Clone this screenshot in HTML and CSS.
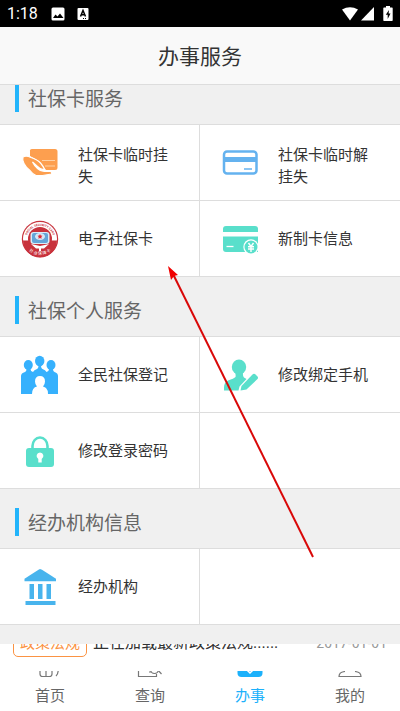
FILE: index.html
```html
<!DOCTYPE html>
<html lang="zh-CN">
<head>
    <meta charset="UTF-8">
    <meta name="viewport" content="width=device-width, initial-scale=1.0">
    <title>办事服务</title>
    <link rel="stylesheet" href="styles.css">
</head>
<body>
    <div class="status-bar">
        <span class="time">1:18</span>
        <svg width="14" height="14" viewBox="0 0 14 14">
            <rect x="0.5" y="0.5" width="13" height="13" rx="1.5" fill="#fff"/>
            <path d="M2 11l2.500-3.500 2 2 2.500-3 3.500 4.500z" fill="#000"/>
        </svg>
        <svg class="status-app" width="12" height="14" viewBox="0 0 12 14">
            <rect x="0.500" y="1" width="11" height="12" rx="1" fill="#fff"/>
            <path d="M3.500 9.500L6 3.500l2.500 6M4.300 7.700h3.400" fill="none" stroke="#000" stroke-width="1.500"/>
            <path d="M6 11.500h1M8 11.500h1" stroke="#000"/>
        </svg>
        <div class="status-right">
            <svg width="18" height="14" viewBox="0 0 18 14"><path d="M1 2.500Q9-2 17 2.500L9 13.500z" fill="#fff"/></svg>
            <svg width="13" height="14" viewBox="0 0 13 14"><path d="M13 0v13.500H0z" fill="#fff"/></svg>
            <svg class="battery" width="10" height="15" viewBox="0 0 10 15">
                <path d="M3 0h4v1.500h2q.700 0 .700.700v12q0 .800-.700.800H1q-.700 0-.700-.800v-12q0-.700.700-.700h2z" fill="#fff"/>
                <path d="M6 4L2.800 8.800h1.900V13L7.500 7.500H5.600z" fill="#000"/>
            </svg>
        </div>
    </div>

    <header>
        <h1>办事服务</h1>
    </header>

    <main>
        <h2>社保卡服务</h2>
        <div class="grid">
            <a href="#" class="item">
                <svg class="icon" viewBox="0 0 40 40">
                    <path d="M12 6h23q2.500 0 2.500 2.500v16q0 2.500-2.500 2.500H26L19 18l-9-5V8.500Q9.500 6 12 6z" fill="#fd9f4f"/>
                    <path d="M22 17.500h13M25 23h10" stroke="#ffd2a6" stroke-width="1"/>
                    <path d="M3 14q3-2 8 .500 7 2.500 9.500 5.500 3 3.500 4 6.500-4 .500-7-3l-5-4.500q2 4 5 6.500 3 3 7 3h6q2 1 1 2.500l-9 1.500H16q-3.500-1.500-6-5-4-3-6-7-2-3.500-1-6.500z" fill="#fd9f4f" stroke="#fff" stroke-width="1.200"/>
                </svg>
                <span class="label label-long">社保卡临时挂失</span>
            </a>
            <a href="#" class="item">
                <svg class="icon" viewBox="0 0 40 40">
                    <rect x="4" y="8.500" width="32.500" height="22" rx="3" fill="#fff" stroke="#64b2ef" stroke-width="2.500"/>
                    <path d="M4 16.500h32" stroke="#64b2ef" stroke-width="5"/>
                    <path d="M24 26h8" stroke="#64b2ef" stroke-width="1.500"/>
                </svg>
                <span class="label label-long">社保卡临时解挂失</span>
            </a>
            <a href="#" class="item">
                <svg class="icon" viewBox="0 0 40 40">
                    <defs>
                        <path id="arc-top" d="M7 24a13.500 13.500 0 1 1 26 0"/>
                        <path id="arc-bottom" d="M4.500 24a16 16 0 0 0 31 0"/>
                    </defs>
                    <circle cx="20" cy="20" r="18.200" fill="#c8323c"/>
                    <circle cx="20" cy="20" r="17" fill="#fff"/>
                    <path d="M3 21.500h34a17 17 0 0 1-34 0z" fill="#c8323c"/>
                    <circle cx="20" cy="20" r="12" fill="#c8323c"/>
                    <path d="M11 25l9 2 9-2-5 4.500h-3V32h-2v-2.500h-3z" fill="#fff"/>
                    <rect x="10.500" y="13" width="19" height="12" rx="3" fill="#d8edf8"/>
                    <rect x="12" y="14" width="16" height="10" rx="2" fill="#64a5d8"/>
                    <ellipse cx="20" cy="17.500" rx="5" ry="3.500" fill="#d6e9f6"/>
                    <path d="M20 15l.800 1.600 1.700.200-1.200 1.200.300 1.700-1.600-.800-1.600.800.300-1.700-1.200-1.200 1.700-.200z" fill="#df2936"/>
                    <text class="seal-en"><textPath href="#arc-top" startOffset="50%">SOCIAL SECURITY CARD</textPath></text>
                    <text class="seal-cn"><textPath href="#arc-bottom" startOffset="50%">社 会 保 障 卡</textPath></text>
                </svg>
                <span class="label">电子社保卡</span>
            </a>
            <a href="#" class="item">
                <svg class="icon" viewBox="0 0 40 40">
                    <path d="M3 13v-3q0-3 3-3h29q3 0 3 3v3z" fill="#59dfcb"/>
                    <path d="M3 17.500h35V33H6q-3 0-3-3z" fill="#59dfcb"/>
                    <path d="M6.500 27.500h7" stroke="#fff" stroke-width="1.300"/>
                    <circle cx="31" cy="28" r="7.700" fill="#fff"/>
                    <circle cx="31" cy="28" r="6.500" fill="#59dfcb"/>
                    <path d="M28.500 24l2.500 3.500 2.500-3.500M28 27.800h6M28 30h6M31 27.500V33" fill="none" stroke="#fff" stroke-width="1.400"/>
                </svg>
                <span class="label">新制卡信息</span>
            </a>
        </div>

        <h2>社保个人服务</h2>
        <div class="grid">
            <a href="#" class="item">
                <svg class="icon" viewBox="0 0 40 40" fill="#36b1fd">
                    <ellipse cx="8.300" cy="10" rx="4.500" ry="5"/>
                    <ellipse cx="31" cy="10" rx="4.500" ry="5"/>
                    <ellipse cx="19.700" cy="6" rx="4.700" ry="5.300"/>
                    <path d="M1 39V21q0-3 4-4 1.500-.500 1.500-3h4q0 2.500 2.500 3 1-2 4-3 1.500-.500 1.500-4h2.500q0 3.500 1.500 4 3 1 4 3 2.500-.500 2.500-3h4q0 2.500 1.500 3 3.500 1 3.500 4v18h-10q0-4-2-6-1-1-3-1.500 2-2 2-5 0-5.500-5-5.500t-5 5.500q0 3 2 5-5 1-5 7.500z"/>
                </svg>
                <span class="label">全民社保登记</span>
            </a>
            <a href="#" class="item">
                <svg class="icon" viewBox="0 0 40 40" fill="#59dfcb">
                    <ellipse cx="19" cy="12" rx="7.200" ry="7.600"/>
                    <path d="M15 16h8q-.500 5 1 6.500l2.500 1.500-7 7.500-1 4H4v-3q0-5 4-7 6-2 7.500-3.500Q16 21 15 16z"/>
                    <path d="M21.500 31L32.500 19.500q1.500-1.500 3 0l2 2q1 1 0 2.500L26.500 34.500l-6 1z"/>
                </svg>
                <span class="label">修改绑定手机</span>
            </a>
            <a href="#" class="item">
                <svg class="icon" viewBox="0 0 40 40">
                    <path d="M12.500 19v-4a7.500 8.500 0 0 1 15 0v4" fill="none" stroke="#59dfcb" stroke-width="2.600"/>
                    <rect x="6" y="17" width="28" height="19" rx="3" fill="#59dfcb"/>
                    <path d="M20 21.500a3.500 3.500 0 0 1 1.700 6.500v3.500h-3.400V28a3.500 3.500 0 0 1 1.700-6.500z" fill="#fff"/>
                </svg>
                <span class="label">修改登录密码</span>
            </a>
            <div class="item"></div>
        </div>

        <h2>经办机构信息</h2>
        <div class="grid">
            <a href="#" class="item">
                <svg class="icon" viewBox="0 0 40 40" fill="#48b4ed">
                    <path d="M20 2l2 .800 14 9v2.500H4.500v-2.500l14-9z"/>
                    <path d="M9.500 17H14v15H9.500zM18 17h4.500v15H18zM26.500 17H31v15h-4.500zM5.500 34h30v4h-30z"/>
                </svg>
                <span class="label">经办机构</span>
            </a>
            <div class="item"></div>
        </div>
    </main>

    <div class="ticker">
        <span class="tag">政策法规</span>
        <span class="news">正在加载最新政策法规......</span>
        <span class="date">2017-01-01</span>
    </div>

    <nav>
        <a href="#">
            <svg width="26" height="24" viewBox="0 0 26 24"><path d="M3 10v10q0 2.500 2.500 2.500h7Q15 22.500 15 20V10M9 14v8M19 22q3-3 2-9" fill="none" stroke="#777" stroke-width="1.200"/></svg>
            <span>首页</span>
        </a>
        <a href="#">
            <svg width="26" height="24" viewBox="0 0 26 24"><path d="M1.500 10v12.500h18V20" fill="none" stroke="#777" stroke-width="1.200"/><path d="M12 18h2M24.500 20L20 15" stroke="#777" stroke-width="1.200"/><circle cx="17.500" cy="15.500" r="4" fill="none" stroke="#777" stroke-width="1.200"/></svg>
            <span>查询</span>
        </a>
        <a href="#" class="active">
            <svg width="26" height="24" viewBox="0 0 26 24"><rect x="0.500" y="2" width="25" height="21" rx="4" fill="#1cb1fb"/><path d="M10 16l3 3 4-4" fill="none" stroke="#fff" stroke-width="1.500"/></svg>
            <span>办事</span>
        </a>
        <a href="#">
            <svg width="26" height="24" viewBox="0 0 26 24"><path d="M8 17.500q-6 .500-6 5h22q0-4.500-6-5" fill="none" stroke="#777" stroke-width="1.200"/><circle cx="13" cy="10" r="6" fill="none" stroke="#777" stroke-width="1.200"/></svg>
            <span>我的</span>
        </a>
    </nav>

    <!-- arrow pointing at the electronic card entry -->
    <svg class="arrow" width="146" height="292" viewBox="0 0 146 292">
        <path d="M5 8L145 291" stroke="#d90808" stroke-width="2"/>
        <path d="M0 0l10 9-4 1-3 4z" fill="#f00000"/>
    </svg>
</body>
</html>
```
FILE: styles.css
```css
* {
    margin: 0;
    padding: 0;
    box-sizing: border-box;
}

body {
    font-family: Roboto, "Noto Sans CJK SC", sans-serif;
    background-color: #f0f0f0;
    color: #333;
    height: 100vh;
    display: flex;
    flex-direction: column;
    position: relative;
    overflow: hidden;
}

a {
    color: inherit;
    text-decoration: none;
}

svg {
    flex-shrink: 0;
}

/* Phone status bar */
.status-bar {
    background-color: #000;
    color: #fff;
    height: 27px;
    padding: 0 7px;
    display: flex;
    align-items: center;
    flex-shrink: 0;
}

.time {
    font-size: 16px;
    margin-right: 13px;
}

.status-app {
    margin-left: 12px;
}

.status-right {
    margin-left: auto;
    display: flex;
    align-items: center;
    gap: 2px;
}

.battery {
    margin-left: 7px;
}

header {
    background-color: #f9f9f9;
    border-bottom: 1px solid #ddd;
    height: 58px;
    padding-bottom: 2px;
    display: flex;
    align-items: center;
    justify-content: center;
    flex-shrink: 0;
}

h1 {
    font-size: 21px;
    font-weight: 400;
}

/* List is scrolled to its end */
main {
    flex: 1;
    min-height: 0;
    padding-bottom: 19px;
    overflow: hidden;
    display: flex;
    flex-direction: column;
    justify-content: flex-end;
}

h2 {
    border-left: 4px solid #22b4fb;
    margin: 19px 15px 12px;
    padding: 4px 0 0 9px;
    font-size: 19px;
    font-weight: 400;
    line-height: 24px;
    color: #666;
    flex-shrink: 0;
}

.grid {
    display: grid;
    grid-template-columns: 1fr 1fr;
    border-top: 1px solid #ddd;
    background-color: #fff;
    flex-shrink: 0;
}

.item {
    height: 76px;
    padding: 0 28px 0 20px;
    border-bottom: 1px solid #ddd;
    display: flex;
    align-items: center;
    gap: 18px;
}

.item:nth-child(odd) {
    border-right: 1px solid #ddd;
}

.icon {
    width: 40px;
    height: 40px;
}

.label {
    font-size: 15px;
    line-height: 22px;
}

.label-long {
    padding-top: 6px;
}

.seal-en {
    font-size: 3px;
    font-weight: 700;
    fill: #c8323c;
    text-anchor: middle;
}

.seal-cn {
    font-size: 4px;
    fill: #fff;
    text-anchor: middle;
}

/* News line, partly covered */
.ticker {
    background-color: #fff;
    height: 27px;
    padding: 0 13px 14px;
    display: flex;
    align-items: flex-end;
    overflow: hidden;
    flex-shrink: 0;
    line-height: 28px;
    white-space: nowrap;
}

.tag {
    border: 1px solid #fb9343;
    border-radius: 5px;
    color: #fb9343;
    font-size: 15px;
    line-height: 26px;
    padding: 0 6px;
    margin-right: 6px;
}

.news {
    font-size: 16px;
}

.date {
    margin-left: auto;
    font-size: 14px;
    color: #999;
}

nav {
    background-color: #fff;
    height: 40px;
    padding-bottom: 4px;
    display: flex;
    align-items: flex-end;
    overflow: hidden;
    flex-shrink: 0;
}

nav a {
    flex: 1;
    display: flex;
    flex-direction: column;
    align-items: center;
    gap: 7px;
    font-size: 15px;
    line-height: 22px;
    color: #666;
}

nav .active {
    color: #1cb1fb;
}

.arrow {
    position: absolute;
    left: 168px;
    top: 266px;
}
```
